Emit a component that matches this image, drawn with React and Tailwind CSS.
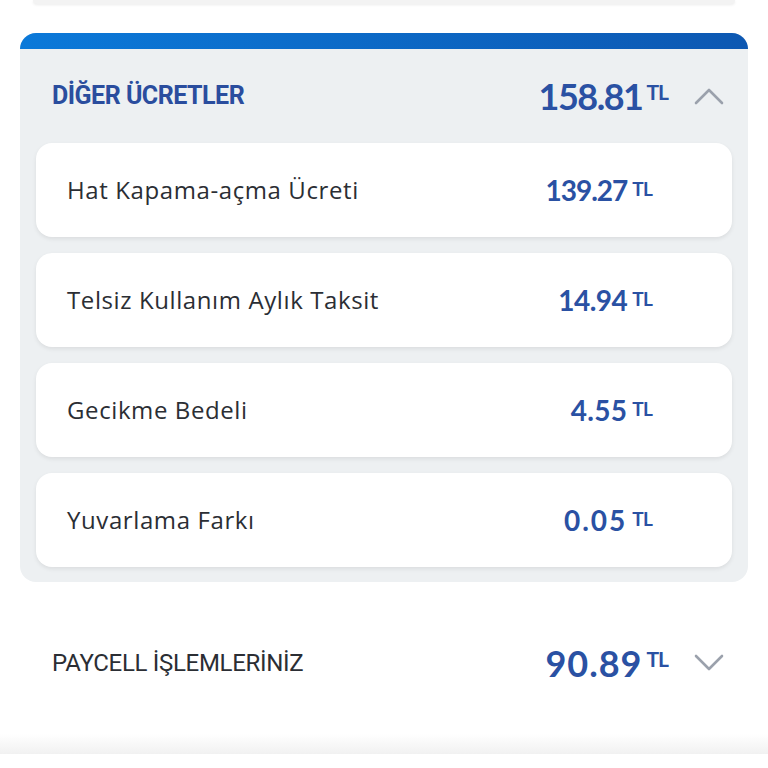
const items = [
  { label: "Hat Kapama-açma Ücreti", amount: "139.27", tr: "tracking-[-1px]" },
  { label: "Telsiz Kullanım Aylık Taksit", amount: "14.94", tr: "tracking-[-0.5px]" },
  { label: "Gecikme Bedeli", amount: "4.55", tr: "tracking-[0.3px]" },
  { label: "Yuvarlama Farkı", amount: "0.05", tr: "tracking-[2px]" },
];

function Chevron({ up }) {
  return (
    <svg width="30" height="20" viewBox="0 0 30 20" fill="none" className="text-[#9ba1ac]">
      <polyline
        points={up ? "2,17 15,4 28,17" : "2,3 15,16 28,3"}
        stroke="currentColor"
        strokeWidth="2.6"
        strokeLinecap="round"
        strokeLinejoin="round"
      />
    </svg>
  );
}

function BigAmount({ value, tr }) {
  return (
    <div className="flex items-start">
      <span className={"text-[36px] leading-none font-bold text-[#2a51a3] " + tr}>{value}</span>
      <span className="ml-[4px] mt-[3px] text-[21px] leading-none font-bold tracking-[-1px] text-[#2a51a3]">
        TL
      </span>
    </div>
  );
}

function SmallAmount({ value, tr }) {
  return (
    <div className="flex items-start">
      <span className={"text-[28px] leading-none font-bold text-[#2a51a3] " + tr}>{value}</span>
      <span className="ml-[5px] mt-[3px] text-[19px] leading-none font-bold tracking-[-0.8px] text-[#2a51a3]">
        TL
      </span>
    </div>
  );
}

export default function App() {
  return (
    <div
      className="relative h-[768px] w-[768px] overflow-hidden bg-white"
      style={{ fontFamily: "Lato, 'Open Sans', sans-serif" }}
    >
      <div className="mx-[33px] h-[4px] rounded-b-[14px] bg-[#f3f3f3] shadow-[0_1px_3px_rgba(0,0,0,0.08)]" />

      <div className="mx-[20px] mt-[29px] overflow-hidden rounded-[16px] bg-[#edf0f2]">
        <div className="h-[16px] bg-gradient-to-r from-[#0b79d9] to-[#0d58b2]" />
        <div className="flex h-[94px] items-center justify-between pl-[32px] pr-[24px]">
          <span
            className="text-[25px] font-bold tracking-[-0.5px] text-[#2a4d9e]"
            style={{ fontFamily: "Roboto, sans-serif" }}
          >
            DİĞER ÜCRETLER
          </span>
          <div className="flex items-center gap-[26px]">
            <BigAmount value="158.81" tr="tracking-[-1.5px]" />
            <Chevron up />
          </div>
        </div>
        <div className="flex flex-col gap-[16px] px-[16px] pb-[15px]">
          {items.map((item) => (
            <div
              key={item.label}
              className="flex h-[94px] items-center justify-between rounded-[16px] bg-white pl-[31px] pr-[80px] shadow-[0_2px_4px_rgba(0,0,0,0.08)]"
            >
              <span
                className="text-[24px] font-medium tracking-[0.6px] text-[#2b2e34]"
                style={{ fontFamily: "'Open Sans', sans-serif" }}
              >
                {item.label}
              </span>
              <SmallAmount value={item.amount} tr={item.tr} />
            </div>
          ))}
        </div>
      </div>

      <div className="mt-[34px] flex h-[94px] items-center justify-between pl-[52px] pr-[44px]">
        <span
          className="text-[24px] font-normal tracking-[-0.3px] text-[#2b2e34]"
          style={{ fontFamily: "Roboto, sans-serif" }}
        >
          PAYCELL İŞLEMLERİNİZ
        </span>
        <div className="flex items-center gap-[26px]">
          <BigAmount value="90.89" tr="tracking-[1px]" />
          <Chevron />
        </div>
      </div>

      <div className="absolute bottom-[14px] left-0 right-0 h-[20px] bg-gradient-to-b from-white to-[#f1f1f1]" />
    </div>
  );
}
